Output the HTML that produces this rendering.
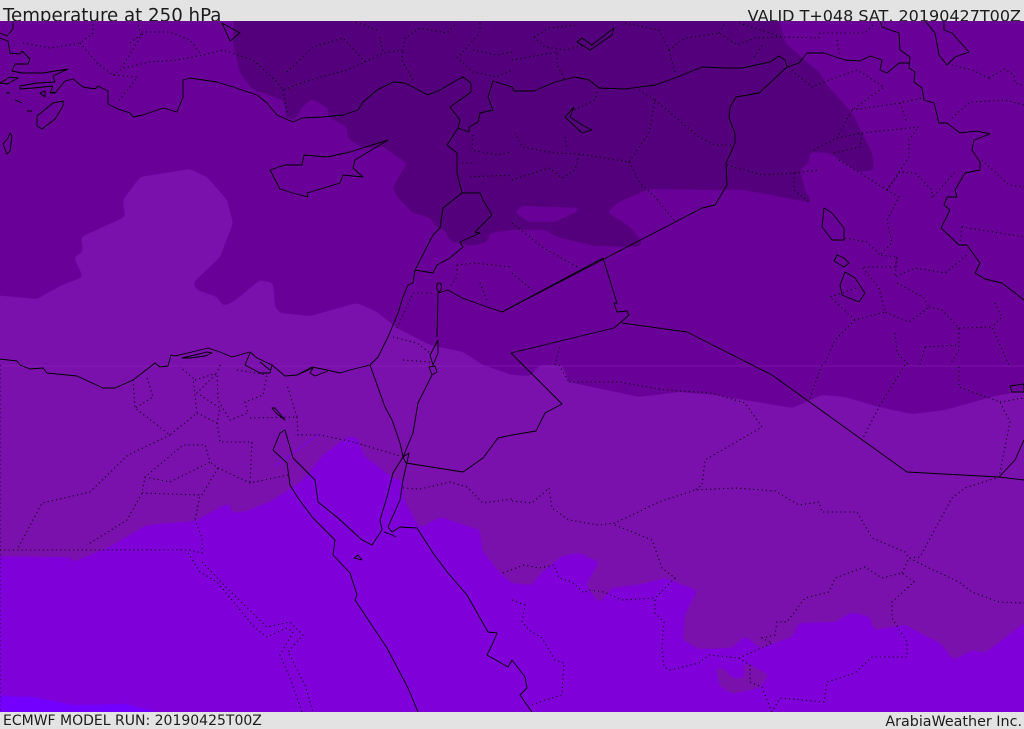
<!DOCTYPE html>
<html><head><meta charset="utf-8"><title>Temperature at 250 hPa</title>
<style>
html,body{margin:0;padding:0;background:#e3e3e3;width:1024px;height:729px;overflow:hidden}
svg{display:block}
text{font-family:"DejaVu Sans",sans-serif;fill:#1c1c1c}
.c{fill:none;stroke:#000;stroke-width:.9;stroke-linejoin:round}
.d{fill:none;stroke:#000;stroke-width:1.1;stroke-dasharray:1.1 3.2;opacity:.95}
</style></head><body>
<svg width="1024" height="729" viewBox="0 0 1024 729" xmlns="http://www.w3.org/2000/svg">
<defs><filter id="s" filterUnits="userSpaceOnUse" x="-40" y="-40" width="1104" height="809" color-interpolation-filters="sRGB">
<feGaussianBlur stdDeviation="2.2"/>
<feComponentTransfer><feFuncA type="linear" slope="7" intercept="-3"/></feComponentTransfer>
</filter></defs>
<rect width="1024" height="729" fill="#e3e3e3"/>
<text x="3" y="21.5" font-size="18.2">Temperature at 250 hPa</text>
<text x="1021" y="21.5" font-size="16" text-anchor="end">VALID T+048 SAT, 20190427T00Z</text>
<text x="3" y="725" font-size="14">ECMWF MODEL RUN: 20190425T00Z</text>
<text x="1022" y="726" font-size="14.3" text-anchor="end">ArabiaWeather Inc.</text>
<svg x="0" y="21" width="1024" height="691" viewBox="0 21 1024 691">
<rect x="0" y="21" width="1024" height="691" fill="#690097"/>
<path filter="url(#s)" fill="#54007c" fill-rule="evenodd" d="M235,-10L233,43L240,73L253,90L283,100L287,117L295,120L302,107L312,99L328,108L328,117L347,127L348,138L363,148L383,147L407,163L393,187L397,197L413,213L430,218L437,228L445,230L450,241L470,246L487,242L490,233L512,230L545,230L557,237L595,246L640,247L642,242L630,227L607,212L619,202L649,189L725,190L745,190L812,203L805,190L800,170L809,162L810,152L829,153L859,172L874,170L872,153L852,113L827,85L820,73L785,43L772,-10ZM514,212L522,206L584,208L555,222L529,222Z"/>
<path filter="url(#s)" fill="#7a11ad" d="M-30,293L37,299L60,286L83,277L74,257L83,252L81,237L125,217L123,200L140,177L190,169L207,177L227,200L233,223L220,257L193,283L197,290L217,297L223,306L233,302L260,280L273,283L275,307L280,313L310,316L357,303L377,312L397,328L430,345L463,352L483,365L512,375L530,376L540,365L562,365L569,382L592,387L639,397L679,392L715,395L792,408L822,395L845,397L879,407L912,414L945,410L995,396L1054,385L1054,750L-30,750Z"/>
<path filter="url(#s)" fill="#7f00d9" d="M-30,556L70,557L73,562L107,548L147,525L195,521L228,503L233,513L247,511L273,500L303,480L323,455L347,437L357,437L365,457L377,465L392,478L402,480L405,502L420,528L440,517L480,530L482,550L500,573L512,583L532,585L542,572L562,556L579,553L599,562L586,585L599,603L612,588L642,584L665,578L697,590L685,615L683,640L699,649L732,648L745,636L760,648L792,637L799,623L835,622L852,612L870,617L874,630L905,625L940,643L954,660L972,650L985,653L1054,600L1054,750L-30,750Z"/>
<path filter="url(#s)" fill="#7a11ad" d="M716,668L725,669L732,678L744,678L745,662L769,675L759,688L732,694L719,685Z"/>
<path filter="url(#s)" fill="#7300ff" d="M-30,695L33,697L73,705L127,704L157,712L170,740L-30,740Z"/>
<rect x="0" y="365.5" width="1024" height="1" fill="#8a22b8" opacity=".6"/>
<path fill="none" stroke="#7f00e6" stroke-width="2" stroke-dasharray="2 2" d="M275,466L320,433"/>
<!-- dotted admin lines -->
<path class="d" d="M23,43L50,48L80,43L93,33L93,22M80,43L97,63L113,75L137,77L133,83L117,103M113,75L123,68L150,62L177,60L203,55L223,50L253,60L277,82L283,90L310,80L347,70L365,62L383,53L403,50L405,38L420,28L447,33L457,23M137,21L140,32L170,32L190,40L200,53M130,43L143,33L122,67M287,72L313,47L343,38L365,62M377,30L353,21M380,37L383,53M413,80L402,60L403,50M460,55L480,33L480,21M473,50L497,55L512,52M457,57L473,72L497,77L512,70M283,90L288,117M473,135L472,150L497,155L512,152M470,177L512,175M462,163L473,163M457,265L473,263L512,267M480,283L488,303M457,265L457,277L450,287M397,328L413,293L433,293M393,337L417,343L430,353M403,360L430,362"/>
<path class="d" d="M534,37L549,28L575,25M534,37L545,47L565,50L592,43M512,60L557,52L557,65L565,80M669,50L685,38L719,33L737,45L755,38L782,37L819,38L820,33L865,33L875,23M669,50L675,72M625,23L659,30L669,50M719,33L725,23M739,23L782,37M754,57L764,43M837,40L840,57M597,92L595,100L574,110M639,90L655,100L649,133L629,162L579,154L555,153L522,147L515,133M655,100L699,137L715,145L732,145M579,154L575,170L562,178L549,168L512,180M565,137L567,150M629,162L640,183L655,197L674,220M727,165L762,175L794,173L819,170M794,173L794,190L809,202M814,150L837,138L862,133L919,127L909,140L909,157L887,190L900,172L915,173L932,190L932,198L955,172M837,138L852,110L884,87L857,70L829,80L812,87L789,68M834,153L860,147L862,133M839,160L855,170L887,190M852,110L900,103L922,98M900,103L907,123M952,118L970,102L1005,100L1024,105M989,78L1004,69L1014,75L1015,83L1024,86M989,78L972,70L952,65M982,160L1009,185L1024,187M887,190L899,197L887,220L892,243L880,255L897,257L895,267L862,267L879,288L885,312L855,320L830,297L859,287M845,238L867,242L880,255M897,257L895,277L915,268L945,273L967,255M897,283L924,298L929,307L909,322L885,312M929,307L942,310L959,328L959,350L950,365M855,320L835,340L824,365M895,333L897,353L909,365M925,347L959,345M925,347L920,365M959,328L992,327L1009,365M995,303L1002,317L992,327M962,227L1024,237M962,227L960,243M512,273L532,290M512,223L542,247L579,268M555,365L560,345"/>
<path class="d" d="M0,365L0,712M133,380L135,408L170,435L197,413L193,378L180,367M147,378L153,397L135,408M197,413L217,423L220,408L197,393L217,373M170,435L128,455L90,492L42,503L17,550M195,380L217,373L218,400L230,420L248,413L245,402L263,395L267,375M237,370L267,375M220,365L217,373M217,423L220,442L252,442L250,482M250,418L297,417L287,385M297,417L298,435L320,435L353,442L400,456M145,477L170,482L210,462L205,445L183,445L145,477L142,493L127,520L87,545M142,493L200,495L195,520M202,495L218,468L210,462M218,468L250,483L288,475M0,550L190,550L202,553L202,538L195,520M188,553L200,572L217,582L255,628L267,637L287,628L293,632L280,655L290,678L302,712M202,562L227,588L267,627L290,622L303,635L288,652L305,685L313,712M403,488L420,489L450,482L467,487L483,503L512,499"/>
<path class="d" d="M512,501L532,503L549,488L552,508L569,520L599,525L615,523L659,502L695,490L735,488L775,491L799,505L819,502L822,512L857,512L872,538L905,552L909,558L920,557L952,498L965,488L999,477L1010,422L1000,402L959,387L959,365M1000,402L1024,398M569,382L619,382L665,390L712,393L745,403L762,427L705,460L702,485L695,490M615,525L652,540L662,568L675,578L655,598L655,613L664,622L662,648L664,667L670,670L699,663L709,655L739,658L772,643L762,638L775,635L777,622L787,622L805,598L829,592L835,578L865,567L882,578L902,573L914,582L892,602L892,618L907,642L907,657L872,657L855,673L827,682L824,702L780,698L772,712M739,658L750,665L750,682L762,687L769,705L772,712M902,573L909,558L929,568L959,582L972,592L999,602L1024,603M503,573L524,565L539,568L554,565L559,578L572,582L584,593L589,590L604,592L622,600L655,598M512,600L525,605L522,622L529,630L542,638L555,660L564,663L562,695L545,700L532,705M559,365L569,382M822,365L809,400M905,365L880,405L862,440"/>
<!-- solid coast and borders -->
<path class="c" d="M13,21L13,29L7,36L0,33M0,38L8,41L10,53L20,54L22,51L30,59L28,64L15,64L12,71L22,73L43,73L68,69L53,76L55,82L37,83L20,86L20,89L33,88L53,86L50,93L55,93L65,81L73,79L83,87L95,89L98,86L108,91L108,104L118,109L130,113L133,117L143,115L163,108L177,112L183,97L183,80L190,78L217,82L233,87L257,95L267,103L277,115L293,122L302,118L323,117L343,115L358,110L363,102L377,90L393,82L405,83L428,95L440,90L457,80L463,77L471,83L471,92L450,107L460,120L458,128L447,145L457,153L457,173L462,193L480,193L483,200L492,215L475,232L480,233L460,242L463,247L450,258L437,265L433,273L415,270"/>
<path class="c" d="M462,193L443,208L440,228L433,235L415,270L413,283L408,285L403,297L398,313L388,337L378,357L370,365L350,370L340,373L327,370L312,367L297,375L285,376L272,365L257,358L250,352L232,357L220,352L208,348L192,352L175,356L171,355L168,366L160,367L155,363L150,367L133,380L115,388L103,388L77,376L47,373L43,368L30,369L20,365L17,361L0,359"/>
<path class="c" d="M182,358L195,355L207,352L212,353L205,356L190,358ZM250,353L245,365L260,373L270,373L272,365M260,362L270,370M297,375L313,368L310,373L315,376L328,371"/>
<path class="c" d="M370,365L385,407L392,420L400,443L403,457L406,463L463,472L483,458L498,438L512,435L536,431L545,413L562,404L511,353L614,328L629,315L627,311L617,312L614,303L617,303L603,258L502,312L473,302L462,298L448,290L438,293L437,337M438,340L430,355L433,365L438,353ZM429,367L432,375L437,372L435,366ZM432,375L418,403L413,433L403,457L409,453L403,480L400,500L388,527L392,532L400,527L417,528L433,553L448,573L467,595L488,632L497,633L493,643L487,655L508,667L512,660L525,677L527,688L520,695L532,712"/>
<path class="c" d="M502,312L702,208L715,205L727,185L726,163L735,143L735,133L729,118L730,107L736,97L759,93L787,67L799,63L807,53L824,53L845,60L860,61L870,56L882,60L880,70L887,73L899,63L909,63M880,21L882,27L899,33L900,50L910,57L909,68L915,72L914,82L922,88L924,100L934,103L939,123L947,123L960,133L977,131L990,134L974,140L972,150L980,162L980,170L965,173L955,190L957,197L947,197L944,205L950,210L941,228L959,245L967,245L980,263L975,273L985,279L1002,283L1024,300"/>
<path class="c" d="M493,81L512,87L514,91L534,91L555,82L575,77L589,80L599,88L625,89L655,85L675,78L702,67L725,68L742,68L770,62L779,56L785,60L787,67M493,81L488,97L493,110L480,113L478,122L469,127L469,132L458,128"/>
<path class="c" d="M622,323L687,332L772,375L907,472L999,477L1024,480M999,477L1015,460L1024,440"/>
<path class="c" d="M403,457L393,473L387,497L380,520L382,530L372,545L362,540L338,518L318,502L315,480L293,458L285,430L280,433L273,450L287,463L290,485L298,498L313,518L335,540L333,555L350,573L357,595L355,600L387,648L408,688L418,712"/>
<path class="c" d="M270,170L285,165L302,165L304,155L327,157L350,152L388,140L355,160L353,168L363,177L343,175L340,183L317,190L307,193L308,197L293,193L280,189ZM63,101L53,103L37,116L37,126L42,129L55,119L63,106ZM10,133L12,136L10,151L7,154L3,144L8,138ZM0,83L10,77L18,78L7,84ZM6,93L10,93M40,93L45,91L45,97ZM50,93L55,92M15,100L22,103M27,111L32,111M222,23L240,33L230,41ZM577,42L582,38L592,45L614,28L612,35L590,50ZM574,107L565,117L582,133L592,130L584,126L570,117ZM925,21L935,33L939,55L947,65L955,57L969,52L952,33L944,30L944,21M824,208L822,227L832,240L844,240L844,228L832,213ZM837,255L834,261L844,267L849,263L844,258ZM845,272L840,285L842,295L859,302L865,293L855,278ZM272,408L276,413L285,420L280,414L275,408ZM439,283C436,283 436,290 439,292C442,290 442,283 439,283ZM354,558L362,560L358,555ZM384,532L392,535L396,537M1010,386L1024,384L1024,392L1012,392Z"/>
</svg>
</svg>
</body></html>
